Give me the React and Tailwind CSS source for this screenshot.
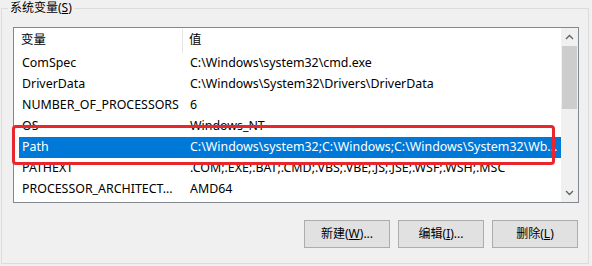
import React from 'react';

const rows = [
    ['ComSpec', 'C:\\Windows\\system32\\cmd.exe'],
    ['DriverData', 'C:\\Windows\\System32\\Drivers\\DriverData'],
    ['NUMBER_OF_PROCESSORS', '6'],
    ['OS', 'Windows_NT'],
    ['Path', 'C:\\Windows\\system32;C:\\Windows;C:\\Windows\\System32\\Wb...'],
    ['PATHEXT', '.COM;.EXE;.BAT;.CMD;.VBS;.VBE;.JS;.JSE;.WSF;.WSH;.MSC'],
    ['PROCESSOR_ARCHITECT...', 'AMD64'],
];

const Button = ({ label, hotkey, tail }) => (
    <button className="w-[86px] h-[28px] bg-[#e1e1e1] border border-[#adadad] text-[12px] text-black flex items-center justify-center">
        {label}(<span className="underline">{hotkey}</span>){tail}
    </button>
);

const App = () => {
    return (
        <div className="w-[592px] h-[266px] bg-[#f0f0f0] overflow-hidden font-['Noto_Sans','Noto_Sans_CJK_SC',sans-serif] text-[12px] text-black">
            <div className="relative mt-[8px] ml-[1px] w-[588px] h-[256px] border border-[#dcdcdc]">
                {/* group title */}
                <div className="absolute left-[6px] top-[-9px] px-[2px] bg-[#f0f0f0] leading-[16px]">
                    系统变量(<span className="underline">S</span>)
                </div>

                {/* list view */}
                <div className="ml-[11px] mt-[18px] w-[566px] h-[176px] border border-[#828790] bg-white flex text-[12.4px]">
                    <div className="flex-1 flex flex-col">
                        <div className="h-[25px] flex items-center">
                            <div className="w-[169px] pl-[7px] border-r border-[#e5e5e5] h-[24px] flex items-center">变量</div>
                            <div className="pl-[6px]">值</div>
                        </div>
                        {rows.map(([name, value]) => {
                            const selected = name === 'Path';
                            return (
                                <div
                                    key={name}
                                    className={`h-[21px] ml-[5px] flex items-center whitespace-nowrap ${selected ? 'bg-[#0078d7] text-white' : ''}`}
                                >
                                    <div className="w-[171px] pl-[3px]">{name}</div>
                                    <div>{value}</div>
                                </div>
                            );
                        })}
                    </div>

                    {/* scrollbar */}
                    <div className="w-[17px] bg-[#f0f0f0] flex flex-col items-center">
                        <div className="h-[18px] flex items-center justify-center">
                            <svg width="9" height="6" viewBox="0 0 9 6">
                                <path d="M1 5 L4.5 1.5 L8 5" stroke="#606060" strokeWidth="1.3" fill="none" />
                            </svg>
                        </div>
                        <div className="w-[15px] h-[63px] bg-[#cdcdcd]" />
                        <div className="flex-1" />
                        <div className="h-[18px] flex items-center justify-center">
                            <svg width="9" height="6" viewBox="0 0 9 6">
                                <path d="M1 1 L4.5 4.5 L8 1" stroke="#606060" strokeWidth="1.3" fill="none" />
                            </svg>
                        </div>
                    </div>
                </div>

                {/* buttons */}
                <div className="mt-[17px] ml-[302px] flex gap-[8px]">
                    <Button label="新建" hotkey="W" tail="..." />
                    <Button label="编辑" hotkey="I" tail="..." />
                    <Button label="删除" hotkey="L" tail="" />
                </div>

                {/* red annotation box */}
                <div className="absolute left-[10px] top-[116px] w-[543px] h-[40px] border-[3px] border-[#e8262b] rounded-[4px]" />
            </div>
        </div>
    );
};

export default App;
